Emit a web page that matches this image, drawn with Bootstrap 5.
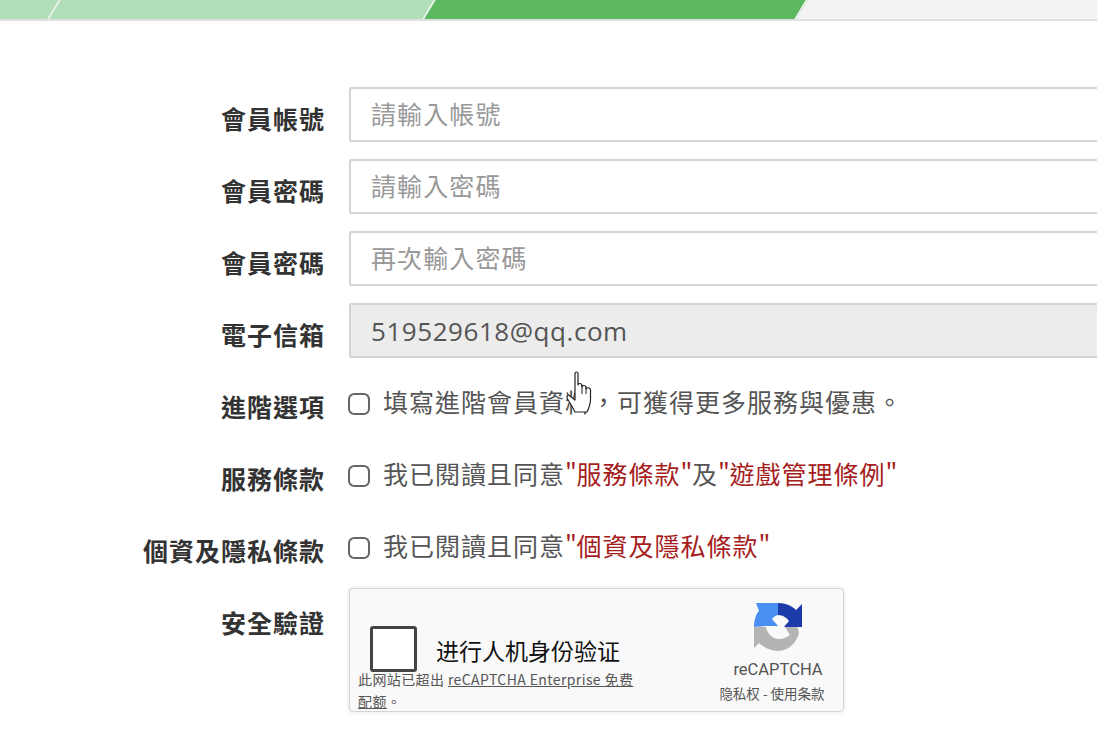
<!DOCTYPE html>
<html lang="zh-Hant">
<head>
<meta charset="utf-8">
<title>會員註冊</title>
<link rel="stylesheet" href="https://cdn.jsdelivr.net/npm/bootstrap@5.3.0/dist/css/bootstrap.min.css">
<style>
html,body{height:731px;overflow:hidden;background:#fff;}
body{font-family:"Noto Sans CJK TC","Open Sans",sans-serif;color:#555;position:relative;}
.stepbar{height:21px;border-bottom:2px solid #e0e0e0;overflow:hidden;background:#f3f3f3;}
.stepbar>div{height:19px;transform:skewX(-31deg);border-right:2px solid #f2f2f2;}
.seg-a{width:64px;margin-left:-9px;background:#b1dfb9;}
.seg-b{width:375px;background:#b1dfb9;}
.seg-c{width:372px;background:#5cb95f;}
.regform{padding-top:66px;}
.frow{margin-bottom:17px;min-height:55px;}
.flabel{width:325px;flex:none;text-align:right;font-weight:700;font-size:25px;letter-spacing:1px;line-height:35px;color:#333;padding-top:14px;margin-right:24px;white-space:nowrap;}
.fbody{flex:1;min-width:0;}
.finput{display:block;width:calc(100% + 20px);height:55px;border:2px solid #d4d4d4;background:#fff;border-radius:2px;padding:0 20px 3px;font-size:25px;letter-spacing:1.1px;color:#555;font-family:"Noto Sans CJK TC",sans-serif;outline:0;}
.finput::placeholder{color:#999;opacity:1;}
.finput:disabled{background:#ececec;font-family:"Open Sans",sans-serif;font-size:26px;letter-spacing:.55px;color:#555;padding-bottom:0;}
.chk{padding-top:8px;line-height:36px;font-size:25px;letter-spacing:1px;color:#555;white-space:nowrap;}
.chk input{width:22px;height:22px;margin:0 13px 0 -1px;border:2px solid #666;border-radius:4px;flex:none;position:relative;top:3px;box-shadow:none;}
.redtxt{color:#a51d1d;}
.qt{letter-spacing:-.4px;}
.rcbox{width:495px;height:124px;margin-top:-3px;border:1px solid #d3d3d3;border-radius:4px;background:#f9f9f9;box-shadow:0 0 4px rgba(0,0,0,.12);}
.rcleft{width:290px;padding-left:8px;padding-top:37px;}
.rcline{padding-left:12px;}
.rccheck{width:47px;height:46px;border:3px solid #444;border-radius:3px;background:#fff;margin-right:19px;flex:none;}
.rctitle{font-family:"Noto Sans CJK SC",sans-serif;font-size:23px;color:#111;line-height:46px;padding-top:1px;}
.rcnote{font-family:"Noto Sans CJK SC","Roboto",sans-serif;font-size:14px;line-height:22px;color:#555;margin-top:-5px;width:278px;letter-spacing:.4px;}
.rcnote a{color:#555;}
.rcright{width:132px;margin-left:auto;margin-right:5px;padding-top:13px;text-align:center;}
.rclogo{display:block;margin-left:47px;}
.rcbrand{font-family:Roboto,sans-serif;font-size:16.5px;color:#555;line-height:20px;margin-top:7px;padding-left:12px;}
.rclinks{font-family:"Noto Sans CJK SC",sans-serif;font-size:13.5px;color:#555;line-height:20px;margin-top:3px;white-space:nowrap;}
.hand{position:absolute;left:565px;top:370px;}
</style>
</head>
<body>
<div class="stepbar d-flex"><div class="seg-a"></div><div class="seg-b"></div><div class="seg-c"></div></div>
<form class="regform">
  <div class="frow d-flex"><label class="flabel">會員帳號</label><div class="fbody"><input class="finput" placeholder="請輸入帳號"></div></div>
  <div class="frow d-flex"><label class="flabel">會員密碼</label><div class="fbody"><input class="finput" placeholder="請輸入密碼"></div></div>
  <div class="frow d-flex"><label class="flabel">會員密碼</label><div class="fbody"><input class="finput" placeholder="再次輸入密碼"></div></div>
  <div class="frow d-flex"><label class="flabel">電子信箱</label><div class="fbody"><input class="finput" value="519529618@qq.com" disabled></div></div>
  <div class="frow d-flex"><label class="flabel">進階選項</label><div class="fbody chk d-flex align-items-center align-self-start"><input type="checkbox" class="form-check-input"><span>填寫進階會員資料，可獲得更多服務與優惠。</span></div></div>
  <div class="frow d-flex"><label class="flabel">服務條款</label><div class="fbody chk d-flex align-items-center align-self-start"><input type="checkbox" class="form-check-input"><span>我已閱讀且同意<span class="redtxt"><span class="qt">"</span>服務條款<span class="qt">"</span></span>及<span class="redtxt"><span class="qt">"</span>遊戲管理條例<span class="qt">"</span></span></span></div></div>
  <div class="frow d-flex"><label class="flabel">個資及隱私條款</label><div class="fbody chk d-flex align-items-center align-self-start"><input type="checkbox" class="form-check-input"><span>我已閱讀且同意<span class="redtxt"><span class="qt">"</span>個資及隱私條款<span class="qt">"</span></span></span></div></div>
  <div class="frow d-flex"><label class="flabel">安全驗證</label><div class="fbody">
    <div class="rcbox d-flex">
      <div class="rcleft">
        <div class="rcline d-flex"><div class="rccheck"></div><div class="rctitle">进行人机身份验证</div></div>
        <div class="rcnote">此网站已超出 <a href="#">reCAPTCHA Enterprise 免费配额</a>。</div>
      </div>
      <div class="rcright">
        <svg class="rclogo" width="50" height="51" viewBox="0 0 50 51">
          <path fill="#4a90f2" d="M1 25C1 18 3 12 6 9L3 1H25V13C22 14 20 15 19 17L25 24H13Z"/>
          <path fill="#1c3aa9" d="M25 1C33 1 39 4 43 8L49 2V25H31L36 19C34 16 30 13 25 13Z"/>
          <path fill="#b4b4b4" d="M1 25H13C14 31 19 37 26 37C31 37 34 35 37 33L32 25H44C47 30 46 33 43 38C39 45 32 49 25 49C17 49 10 45 6 41L1 46Z"/>
        </svg>
        <div class="rcbrand">reCAPTCHA</div>
        <div class="rclinks">隐私权 - 使用条款</div>
      </div>
    </div>
  </div></div>
</form>
<svg class="hand" width="30" height="44" viewBox="0 0 30 44" aria-hidden="true">
  <path fill="#fff" stroke="#222" stroke-width="1.2" stroke-linejoin="round" d="M10 3.500C10 1.500 13 1.500 13 3.500V15C13 13 16.500 13 17 15V17C17.500 15 20.500 15 21 17V19C22 17 25.500 17.500 25.500 20V29C25.500 34 24 38 22 42H10C8 38 5 33 2.500 29C1 26 3 24 5 26L10 30Z"/>
  <path fill="none" stroke="#222" stroke-width="1" d="M17 15V24M21 17V24"/>
</svg>
</body>
</html>
